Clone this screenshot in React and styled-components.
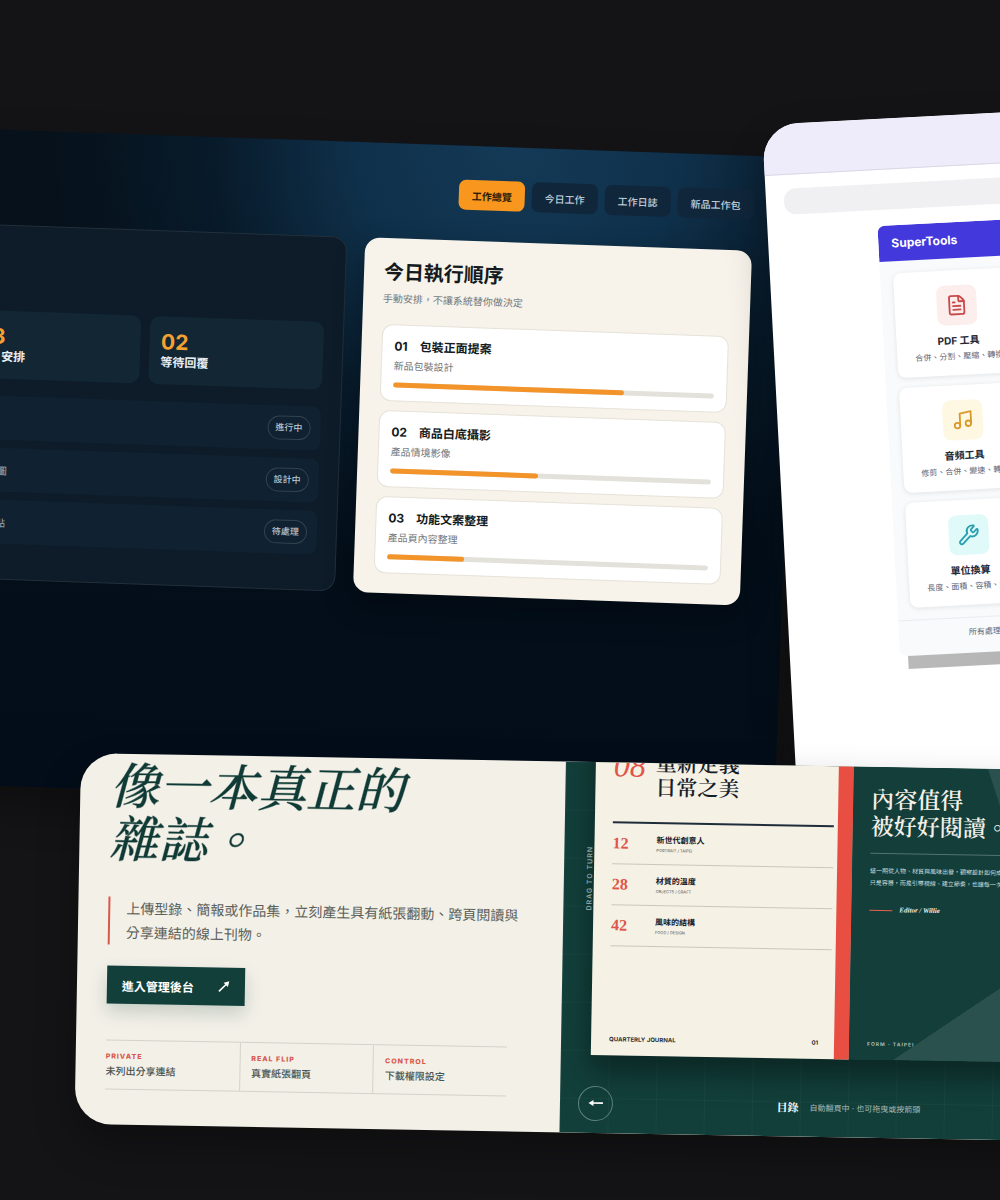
import React from 'react';
import styled, { createGlobalStyle } from 'styled-components';
import { FileText, Music, Wrench } from 'lucide-react';

const tabs = ['工作總覽', '今日工作', '工作日誌', '新品工作包'];

const stats = [
  { value: '05', label: '今日工作' },
  { value: '03', label: '今日安排' },
  { value: '02', label: '等待回覆' },
];

const jobs = [
  { name: '新品包裝設計', note: '正面提案', status: '進行中' },
  { name: '產品情境影像', note: '白底情境圖', status: '設計中' },
  { name: '產品頁內容', note: '整理功能點', status: '待處理' },
];

const tasks = [
  { no: '01', title: '包裝正面提案', sub: '新品包裝設計', done: 72 },
  { no: '02', title: '商品白底攝影', sub: '產品情境影像', done: 46 },
  { no: '03', title: '功能文案整理', sub: '產品頁內容整理', done: 24 },
];

const tools = [
  { name: 'PDF 工具', desc: '合併、分割、壓縮、轉換', Icon: FileText, color: '#c94a4a', tint: '#fdeeee' },
  { name: '音頻工具', desc: '修剪、合併、變速、轉檔', Icon: Music, color: '#d99a2b', tint: '#fef7e2' },
  { name: '單位換算', desc: '長度、面積、容積、重量', Icon: Wrench, color: '#2a9fae', tint: '#e0fafa' },
];

const features = [
  { label: 'PRIVATE', text: '未列出分享連結' },
  { label: 'REAL FLIP', text: '真實紙張翻頁' },
  { label: 'CONTROL', text: '下載權限設定' },
];

const chapters = [
  { page: '12', title: '新世代創意人', tag: 'PORTRAIT / TAIPEI' },
  { page: '28', title: '材質的溫度', tag: 'OBJECTS / CRAFT' },
  { page: '42', title: '風味的結構', tag: 'FOOD / DESIGN' },
];

function Arrow({ turn = 0 }) {
  return (
    <svg width="16" height="16" viewBox="0 0 16 16" aria-hidden="true">
      <g transform={`rotate(${turn} 8 8)`}>
        <path d="M4 8H15" stroke="currentColor" strokeWidth="1.6" />
        <path d="M0.5 8L5.5 5V11Z" fill="currentColor" />
      </g>
    </svg>
  );
}

function Dashboard() {
  return (
    <DashboardCard>
      <Tabs>
        {tabs.map((tab, i) => (
          <Tab key={tab} $active={i === 0}>{tab}</Tab>
        ))}
      </Tabs>
      <Panels>
        <DarkPanel>
          <StatGrid>
            {stats.map((stat) => (
              <Stat key={stat.value}>
                <StatValue>{stat.value}</StatValue>
                <StatLabel>{stat.label}</StatLabel>
              </Stat>
            ))}
          </StatGrid>
          <JobList>
            {jobs.map((job) => (
              <Job key={job.name}>
                <span>{job.name}</span>
                <span>{job.note}</span>
                <Status>{job.status}</Status>
              </Job>
            ))}
          </JobList>
        </DarkPanel>
        <LightPanel>
          <PanelTitle>今日執行順序</PanelTitle>
          <PanelHint>手動安排，不讓系統替你做決定</PanelHint>
          <TaskList>
            {tasks.map((task) => (
              <Task key={task.no}>
                <TaskTitle>{task.no}　{task.title}</TaskTitle>
                <TaskSub>{task.sub}</TaskSub>
                <Track>
                  <Fill style={{ width: `${task.done}%` }} />
                </Track>
              </Task>
            ))}
          </TaskList>
        </LightPanel>
      </Panels>
    </DashboardCard>
  );
}

function SuperTools() {
  return (
    <ToolsCard>
      <BrowserTop />
      <AddressBar />
      <ToolsWindow>
        <ToolsHeader>SuperTools</ToolsHeader>
        <ToolGrid>
          {tools.map(({ name, desc, Icon, color, tint }) => (
            <Tool key={name}>
              <ToolIcon $color={color} $tint={tint}><Icon size={22} strokeWidth={2} /></ToolIcon>
              <ToolName>{name}</ToolName>
              <ToolDesc>{desc}</ToolDesc>
            </Tool>
          ))}
        </ToolGrid>
        <ToolsFooter>所有處理皆在瀏覽器完成</ToolsFooter>
      </ToolsWindow>
      <WindowShade />
    </ToolsCard>
  );
}

function Magazine() {
  return (
    <MagazineCard>
      <Intro>
        <Headline>像一本真正的<br />雜誌。</Headline>
        <Quote>
          上傳型錄、簡報或作品集，立刻產生具有紙張翻動、跨頁閱讀與
          <br />
          分享連結的線上刊物。
        </Quote>
        <AdminLink href="#admin">
          進入管理後台
          <Arrow turn={135} />
        </AdminLink>
        <Features>
          {features.map((item) => (
            <Feature key={item.label}>
              <FeatureLabel>{item.label}</FeatureLabel>
              <FeatureText>{item.text}</FeatureText>
            </Feature>
          ))}
        </Features>
      </Intro>
      <Viewer>
        <Book>
          <Gutter>
            <DragHint>DRAG TO TURN</DragHint>
          </Gutter>
          <Spread>
            <ContentsPage>
              <ContentsHead>
                <Issue>08</Issue>
                <ContentsTitle>重新定義<br />日常之美</ContentsTitle>
              </ContentsHead>
              {chapters.map((chapter) => (
                <Chapter key={chapter.page}>
                  <ChapterPage>{chapter.page}</ChapterPage>
                  <div>
                    <ChapterTitle>{chapter.title}</ChapterTitle>
                    <ChapterTag>{chapter.tag}</ChapterTag>
                  </div>
                </Chapter>
              ))}
              <Folio>
                <span>QUARTERLY JOURNAL</span>
                <span>01</span>
              </Folio>
            </ContentsPage>
            <StoryPage>
              <Facet viewBox="0 0 258 340" preserveAspectRatio="none">
                <polygon points="118,0 198,233 44,340 258,340 258,0" />
              </Facet>
              <StoryTitle>內容值得<br />被好好閱讀。</StoryTitle>
              <StoryText>
                這一期從人物、材質與風味出發，觀察設計如何成為日常
                <br />
                只是容器，而是引導視線、建立節奏，也讓每一次翻閱
              </StoryText>
              <Byline>Editor / Willie</Byline>
              <Folio $light>
                <span>FORM · TAIPEI</span>
              </Folio>
            </StoryPage>
          </Spread>
        </Book>
        <Controls>
          <Turn aria-label="上一頁"><Arrow /></Turn>
          <Caption>
            <strong>目錄</strong>
            <span>自動翻頁中 · 也可拖曳或按箭頭</span>
          </Caption>
          <Turn aria-label="下一頁"><Arrow turn={180} /></Turn>
        </Controls>
      </Viewer>
    </MagazineCard>
  );
}

export default function App() {
  return (
    <Stage>
      <GlobalStyle />
      <Dashboard />
      <SuperTools />
      <Magazine />
    </Stage>
  );
}

const GlobalStyle = createGlobalStyle`
* { box-sizing: border-box; }
body {
  margin: 0;
  background: #141416;
  font-family: Inter, "Noto Sans CJK TC", sans-serif;
}
h1, h2, h3, p { margin: 0; }
button { font-family: inherit; padding: 0; border: 0; cursor: pointer; }
`;

const serif = '"Liberation Serif", "Noto Serif CJK TC", "Noto Sans CJK TC", serif';

const Stage = styled.main`
position: relative;
min-height: 100vh;
overflow: hidden;
background: #141416;
`;

/* tilted cards scattered on the stage */
const Card = styled.section`
position: absolute;
transform-origin: 0 0;
border-radius: 36px;
overflow: hidden;
box-shadow: 0 20px 40px rgba(0, 0, 0, 0.3);
`;

const DashboardCard = styled(Card)`
left: -272px;
top: 120px;
width: 1070px;
height: 656px;
padding: 34px 42px 0;
border-radius: 0;
transform: rotate(2deg);
background: radial-gradient(ellipse 470px 440px at 74% 0, #143a57 0%, #0f304a 35%, rgba(9, 31, 49, 0.7) 65%, transparent 100%), linear-gradient(#06111b, #020d19);
`;
const Tabs = styled.nav`
display: flex;
justify-content: flex-end;
gap: 7px;
`;
const Tab = styled.button`
height: 30px;
padding: 0 13px;
border-radius: 7px;
font-size: 10px;
font-weight: ${(props) => (props.$active ? 700 : 500)};
color: ${(props) => (props.$active ? '#2a1c08' : '#c3d0dc')};
background: ${(props) => (props.$active ? '#f8961e' : '#10263b')};
`;
const Panels = styled.div`
display: grid;
grid-template-columns: 3fr 2fr;
gap: 18px;
margin-top: 31px;
`;
const DarkPanel = styled.div`
padding: 85px 19px 0;
border: 1px solid #22303b;
border-radius: 15px;
background: #0d1c28;
`;
const StatGrid = styled.div`
display: grid;
grid-template-columns: repeat(3, 1fr);
gap: 9px;
`;
const Stat = styled.div`
height: 68px;
padding: 13px 12px;
border-radius: 10px;
background: #122634;
`;
const StatValue = styled.div`
font-size: 21px;
line-height: 25px;
font-weight: 700;
color: #f5a030;
`;
const StatLabel = styled.div`
font-size: 12px;
line-height: 16px;
font-weight: 700;
color: #e8eef3;
`;
const JobList = styled.div`
display: grid;
gap: 8px;
margin-top: 17px;
`;
const Job = styled.div`
display: grid;
grid-template-columns: 166px 1fr auto;
align-items: center;
height: 44px;
padding: 0 10px 0 13px;
border-radius: 9px;
font-size: 10px;
color: #9fb0bd;
background: #102131;
`;
const Status = styled.span`
padding: 0 7px;
border: 1px solid #33424f;
border-radius: 12px;
font-size: 9px;
line-height: 22px;
font-weight: 500;
color: #b6c4d0;
`;
const LightPanel = styled.div`
padding: 20px 20px 20px;
border-radius: 15px;
color: #141a20;
background: #f7f3ea;
box-shadow: 0 12px 30px rgba(0, 0, 0, 0.3);
`;
const PanelTitle = styled.h2`
font-size: 20px;
line-height: 28px;
font-weight: 700;
`;
const PanelHint = styled.p`
margin-top: 4px;
font-size: 10px;
line-height: 16px;
color: #73777a;
`;
const TaskList = styled.div`
display: grid;
gap: 9px;
margin-top: 18px;
`;
const Task = styled.div`
height: 77px;
padding: 13px 12px;
border: 1px solid #e6e2d8;
border-radius: 11px;
background: #fff;
`;
const TaskTitle = styled.h3`
font-size: 12px;
line-height: 16px;
font-weight: 700;
`;
const TaskSub = styled.p`
margin: 3px 0 9px;
font-size: 10px;
line-height: 16px;
color: #73777a;
`;
const Track = styled.div`
height: 5px;
border-radius: 3px;
background: #e3e2da;
`;
const Fill = styled.div`
height: 5px;
border-radius: 3px;
background: #f3942a;
`;

const ToolsCard = styled(Card)`
left: 762px;
top: 125px;
width: 638px;
height: 700px;
transform: rotate(-3deg);
background: #fff;
`;
const BrowserTop = styled.div`
height: 51px;
border-bottom: 1px solid #d9d8e4;
background: #eeecfb;
`;
const AddressBar = styled.div`
height: 26px;
margin: 14px 18px 16px;
border-radius: 12px;
background: #f0eff2;
`;
const ToolsWindow = styled.div`
margin: 0 110px;
border-radius: 7px;
overflow: hidden;
background: #f8fafb;
`;
const ToolsHeader = styled.div`
padding: 0 13px;
font-size: 12px;
line-height: 36px;
font-weight: 700;
color: #fff;
background: #4338dc;
`;
const ToolGrid = styled.div`
display: grid;
grid-template-columns: 124px;
gap: 10px;
padding: 12px 13px;
`;
const Tool = styled.div`
display: flex;
flex-direction: column;
align-items: center;
height: 105px;
padding-top: 15px;
border-radius: 8px;
background: #fff;
box-shadow: 0 1px 5px rgba(20, 30, 50, 0.1);
`;
const ToolIcon = styled.div`
display: grid;
place-items: center;
width: 40px;
height: 40px;
border-radius: 8px;
color: ${(props) => props.$color};
background: ${(props) => props.$tint};
`;
const ToolName = styled.h3`
margin-top: 7px;
font-size: 10px;
line-height: 16px;
font-weight: 700;
color: #232838;
`;
const ToolDesc = styled.p`
margin-top: 2px;
font-size: 8px;
line-height: 12px;
white-space: nowrap;
color: #5f6677;
`;
const ToolsFooter = styled.div`
height: 36px;
padding-left: 70px;
border-top: 1px solid #e9edf0;
font-size: 8px;
line-height: 28px;
color: #5f6677;
`;
const WindowShade = styled.div`
height: 13px;
margin: 0 110px 0 118px;
background: linear-gradient(90deg, #b9b9b9, #a9a9a9);
`;

const MagazineCard = styled(Card)`
display: grid;
grid-template-columns: 485px 1fr;
left: 81px;
top: 753px;
width: 1062px;
height: 371px;
transform: rotate(1deg);
background: #f3f0e8;
`;
const Intro = styled.div`
padding: 7px 54px 0 30px;
`;
const Headline = styled.h1`
font-family: ${serif};
font-size: 49px;
line-height: 53px;
font-weight: 500;
font-style: italic;
white-space: nowrap;
color: #0f3a35;
-webkit-text-stroke: 1px rgba(15, 58, 53, 0.4);
`;
const Quote = styled.p`
margin-top: 30px;
padding-left: 16px;
border-left: 2px solid #d9584c;
font-size: 14px;
line-height: 24px;
white-space: nowrap;
color: #5a605a;
`;
const AdminLink = styled.a`
display: flex;
align-items: center;
justify-content: space-between;
width: 138px;
height: 38px;
margin-top: 21px;
padding: 0 13px 0 15px;
font-size: 12px;
font-weight: 700;
text-decoration: none;
color: #fff;
background: #123f3a;
box-shadow: 0 8px 18px rgba(18, 63, 58, 0.2);
`;
const Features = styled.div`
display: grid;
grid-template-columns: repeat(3, 1fr);
margin-top: 36px;
border: solid #d4d2ca;
border-width: 1px 0;
`;
const Feature = styled.div`
height: 48px;
padding-top: 10px;
& + & {
  padding-left: 11px;
  border-left: 1px solid #d4d2ca;
}
`;
const FeatureLabel = styled.div`
font-size: 7px;
line-height: 11px;
font-weight: 800;
letter-spacing: 1px;
color: #d9584c;
`;
const FeatureText = styled.div`
margin-top: 1px;
font-size: 10px;
line-height: 16px;
font-weight: 500;
color: #4b544e;
`;

const Viewer = styled.div`
display: flex;
flex-direction: column;
justify-content: flex-end;
height: 371px;
overflow: hidden;
background-color: #123f3a;
background-image: linear-gradient(rgba(255, 255, 255, 0.03) 1px, transparent 1px), linear-gradient(90deg, rgba(255, 255, 255, 0.03) 1px, transparent 1px);
background-size: 48px 48px;
`;
const Book = styled.div`
display: grid;
grid-template-columns: 30px 1fr;
flex: none;
height: 340px;
padding-right: 31px;
`;
const Gutter = styled.div`
display: flex;
align-items: flex-end;
justify-content: flex-end;
padding-bottom: 144px;
`;
const DragHint = styled.span`
position: relative;
z-index: 1;
writing-mode: vertical-rl;
transform: rotate(180deg);
font-size: 7px;
line-height: 8px;
font-weight: 600;
letter-spacing: 1px;
white-space: nowrap;
color: #8ba39f;
`;
const Spread = styled.div`
display: grid;
grid-template-columns: 1fr 1fr;
box-shadow: 0 16px 30px rgba(0, 0, 0, 0.4);
`;
const Page = styled.article`
position: relative;
display: flex;
flex-direction: column;
`;
const ContentsPage = styled(Page)`
padding: 36px 4px 0 18px;
border-right: 15px solid #e84f42;
background: #f5f1e4;
`;
const ContentsHead = styled.div`
display: grid;
grid-template-columns: 42px 1fr;
height: 72px;
border-bottom: 2px solid #1f2c3a;
white-space: nowrap;
`;
const Issue = styled.div`
font-family: ${serif};
font-size: 32px;
line-height: 28px;
font-style: italic;
color: #e0554a;
`;
const ContentsTitle = styled.h2`
font-family: ${serif};
font-size: 21px;
line-height: 24px;
font-weight: 600;
color: #16202a;
`;
const Chapter = styled.div`
display: grid;
grid-template-columns: 44px 1fr;
align-items: center;
height: 41px;
border-bottom: 1px solid #c9c7bd;
`;
const ChapterPage = styled.div`
font-family: ${serif};
font-size: 16px;
font-weight: 700;
color: #e0554a;
`;
const ChapterTitle = styled.h3`
font-size: 8px;
line-height: 12px;
font-weight: 700;
color: #16202a;
`;
const ChapterTag = styled.p`
font-size: 4px;
line-height: 9px;
font-weight: 500;
color: #6d6f6c;
`;
const Folio = styled.div`
display: flex;
justify-content: space-between;
margin-top: auto;
padding: 0 12px 12px 0;
font-size: ${(props) => (props.$light ? '5px' : '6px')};
line-height: 8px;
font-weight: 700;
letter-spacing: ${(props) => (props.$light ? '1px' : '0')};
color: ${(props) => (props.$light ? '#a9bbb7' : '#2b3138')};
`;
const StoryPage = styled(Page)`
padding: 67px 0 0 18px;
overflow: hidden;
background: #133e3a;
`;
const Facet = styled.svg`
position: absolute;
inset: 0;
width: 100%;
height: 100%;
fill: rgba(255, 255, 255, 0.1);
`;
const StoryTitle = styled.h2`
padding-bottom: 12px;
border-bottom: 1px solid #54736f;
font-family: ${serif};
font-size: 23px;
line-height: 27px;
font-weight: 600;
white-space: nowrap;
color: #f3f0e8;
`;
const StoryText = styled.p`
margin-top: 11px;
font-size: 6px;
line-height: 12px;
white-space: nowrap;
color: #d5dedb;
`;
const Byline = styled.p`
display: flex;
align-items: center;
gap: 7px;
margin-top: 17px;
font-family: ${serif};
font-size: 7px;
line-height: 8px;
font-weight: 700;
font-style: italic;
color: #f3f0e8;
&:before {
  content: "";
  width: 23px;
  height: 1px;
  background: #e8604f;
}
`;
const Controls = styled.div`
display: grid;
grid-template-columns: 35px 1fr 35px;
flex: none;
align-items: center;
height: 78px;
padding: 18px 18px 0;
`;
const Turn = styled.button`
display: grid;
place-items: center;
height: 35px;
border: 1px solid #5f7f7b;
border-radius: 50%;
color: #fff;
background: transparent;
`;
const Caption = styled.div`
display: flex;
align-items: center;
justify-content: center;
gap: 11px;
font-size: 8px;
color: #a9bbb7;
strong {
  font-family: ${serif};
  font-size: 11px;
  color: #fff;
}
`;
